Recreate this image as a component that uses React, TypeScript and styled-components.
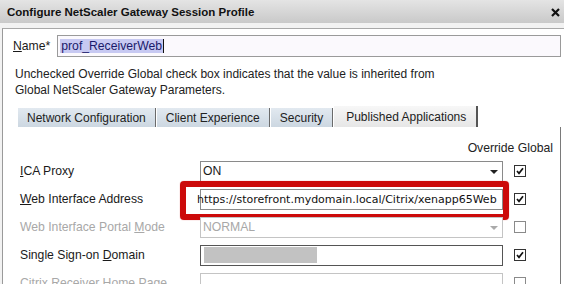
import React from 'react';
import styled, { createGlobalStyle } from 'styled-components';

const GlobalStyle = createGlobalStyle`
  html, body {
    margin: 0;
    padding: 0;
    background: #ffffff;
  }
  body {
    font-family: 'Liberation Sans', Arial, sans-serif;
  }
`;

const Dialog = styled.div`
  width: 564px;
  height: 284px;
  overflow: hidden;
  display: flex;
  flex-direction: column;
  background: #f2f2f2;
`;

const TitleBar = styled.div`
  height: 23px;
  flex-shrink: 0;
  display: flex;
  align-items: center;
  justify-content: space-between;
  padding: 0 4px 0 7px;
  background: linear-gradient(#e4e4e4, #c9c9c9);
`;

const Title = styled.div`
  font-family: 'Liberation Sans', Arial, sans-serif;
  font-weight: bold;
  font-size: 11.5px;
  color: #111;
`;

const CloseButton = styled.svg`
  width: 9px;
  height: 9px;
  margin-top: 1px;
`;

const Body = styled.div`
  flex: 1;
  margin: 5px 0 0 2px;
  background: #ffffff;
  border-left: 1px solid #9a9a9a;
  border-top: 1px solid #a8a8a8;
  padding: 6px 3px 0 10px;
  display: flex;
  flex-direction: column;
`;

const NameRow = styled.div`
  display: flex;
  align-items: center;
  gap: 7px;
  height: 22px;
`;

const Label = styled.span<{ $disabled?: boolean }>`
  font-size: 12.2px;
  color: ${({ $disabled }) => ($disabled ? '#a8a8a8' : '#1a1a1a')};
  white-space: nowrap;
`;

const NameInput = styled.div`
  flex: 1;
  height: 22px;
  box-sizing: border-box;
  border: 1px solid #9a9a9a;
  background: #fbf9fd;
  display: flex;
  align-items: center;
  padding-left: 2px;
`;

const Selected = styled.span`
  background: #c7c9f2;
  color: #1a1a6a;
  font-size: 12.2px;
  line-height: 14px;
  padding: 0 1px;
  border-right: 1px solid #111;
`;

const Description = styled.p`
  margin: 9px 0 0 2px;
  font-size: 12px;
  line-height: 16px;
  color: #222;
`;

const Tabs = styled.div`
  display: flex;
  align-items: flex-end;
  margin: 7px 0 0 5px;
  height: 22px;
`;

const Tab = styled.div<{ $active?: boolean }>`
  height: ${({ $active }) => ($active ? '21px' : '19px')};
  display: flex;
  align-items: center;
  padding: 0 ${({ $active }) => ($active ? '10px' : '9px')} 0 ${({ $active }) => ($active ? '12px' : '9px')};
  margin-right: 1px;
  font-size: 12px;
  color: #222;
  background: ${({ $active }) =>
    $active ? 'linear-gradient(#f7f7f7, #e6e6e6)' : 'linear-gradient(#e2e9f0, #ccd7e1)'};
  border-right: ${({ $active }) => ($active ? '2px solid #555' : '1px solid #6a6a6a')};
`;

const Panel = styled.div`
  flex: 1;
  border-right: 1px solid #7a7a7a;
  display: flex;
  flex-direction: column;
  padding: 13px 0 0 7px;
`;

const OverrideHeader = styled.div`
  text-align: right;
  font-size: 12.2px;
  line-height: 16px;
  color: #222;
  padding-right: 7px;
  height: 16px;
`;

const Rows = styled.div`
  display: grid;
  grid-template-columns: 180px 303px 23px;
  grid-auto-rows: 28px;
  margin-top: 1px;
  align-items: center;
`;

const FieldCell = styled.div`
  position: relative;
  height: 21px;
`;

const Field = styled.div<{ $disabled?: boolean; $dark?: boolean }>`
  height: 21px;
  box-sizing: border-box;
  border: 1px solid ${({ $disabled, $dark }) => ($dark ? '#555' : $disabled ? '#c4c4c4' : '#8a8a8a')};
  background: #ffffff;
  display: flex;
  align-items: center;
  padding-left: 2px;
  font-size: 12.2px;
  color: ${({ $disabled }) => ($disabled ? '#a8a8a8' : '#1a1a1a')};
  position: relative;
`;

const UrlText = styled.span`
  font-family: 'DejaVu Sans', Verdana, sans-serif;
  font-size: 11px;
  color: #111;
  margin-left: -6px;
  white-space: nowrap;
`;

const Arrow = styled.span<{ $disabled?: boolean }>`
  position: absolute;
  right: 4px;
  top: 8px;
  width: 0;
  height: 0;
  border-left: 4px solid transparent;
  border-right: 4px solid transparent;
  border-top: 4px solid ${({ $disabled }) => ($disabled ? '#aaa' : '#222')};
`;

const Redacted = styled.span`
  width: 113px;
  height: 16px;
  background: #c2c2c2;
  margin-left: 1px;
`;

const Highlight = styled.div`
  position: absolute;
  left: -20px;
  top: -8px;
  right: -6px;
  bottom: -10px;
  border: 6px solid #cc0a0a;
  border-radius: 4px;
  pointer-events: none;
  box-shadow: 0 0 1px #d55;
`;

const CheckCell = styled.div`
  display: flex;
  justify-content: flex-end;
`;

const Check = styled.div<{ $disabled?: boolean }>`
  width: 12px;
  height: 12px;
  box-sizing: border-box;
  border: 1px solid ${({ $disabled }) => ($disabled ? '#8a8a8a' : '#333')};
  background: #fff;
  display: flex;
  align-items: center;
  justify-content: center;
`;

const U = styled.span`
  text-decoration: underline;
`;

const CheckMark = () => (
  <svg width="8" height="8" viewBox="0 0 8 8">
    <path d="M1 4 L3 6.3 L7 1.2" stroke="#111" strokeWidth="1.7" fill="none" />
  </svg>
);

type Row = {
  label: React.ReactNode;
  disabled?: boolean;
  checked: boolean;
  field: React.ReactNode;
};

const rows: Row[] = [
  {
    label: <><U>I</U>CA Proxy</>,
    checked: true,
    field: (
      <Field>
        ON
        <Arrow />
      </Field>
    ),
  },
  {
    label: <><U>W</U>eb Interface Address</>,
    checked: true,
    field: (
      <>
        <Field>
          <UrlText>https://storefront.mydomain.local/Citrix/xenapp65Web</UrlText>
        </Field>
        <Highlight />
      </>
    ),
  },
  {
    label: <>Web Interface Portal <U>M</U>ode</>,
    disabled: true,
    checked: false,
    field: (
      <Field $disabled>
        NORMAL
        <Arrow $disabled />
      </Field>
    ),
  },
  {
    label: <>Single Sign-on <U>D</U>omain</>,
    checked: true,
    field: (
      <Field $dark>
        <Redacted />
      </Field>
    ),
  },
  {
    label: <>Citrix Receiver Home Page</>,
    disabled: true,
    checked: false,
    field: <Field $disabled />,
  },
];

export default function App() {
  return (
    <>
      <GlobalStyle />
      <Dialog>
        <TitleBar>
          <Title>Configure NetScaler Gateway Session Profile</Title>
          <CloseButton viewBox="0 0 9 9">
            <path d="M1 1 L8 8 M8 1 L1 8" stroke="#111" strokeWidth="2.2" />
          </CloseButton>
        </TitleBar>
        <Body>
          <NameRow>
            <Label>
              <U>N</U>ame*
            </Label>
            <NameInput>
              <Selected>prof_ReceiverWeb</Selected>
            </NameInput>
          </NameRow>
          <Description>
            Unchecked Override Global check box indicates that the value is inherited from
            <br />
            Global NetScaler Gateway Parameters.
          </Description>
          <Tabs>
            <Tab>Network Configuration</Tab>
            <Tab>Client Experience</Tab>
            <Tab>Security</Tab>
            <Tab $active>Published Applications</Tab>
          </Tabs>
          <Panel>
            <OverrideHeader>Override Global</OverrideHeader>
            <Rows>
              {rows.map((row, i) => (
                <React.Fragment key={i}>
                  <Label $disabled={row.disabled}>{row.label}</Label>
                  <FieldCell>{row.field}</FieldCell>
                  <CheckCell>
                    <Check $disabled={!row.checked}>{row.checked && <CheckMark />}</Check>
                  </CheckCell>
                </React.Fragment>
              ))}
            </Rows>
          </Panel>
        </Body>
      </Dialog>
    </>
  );
}
